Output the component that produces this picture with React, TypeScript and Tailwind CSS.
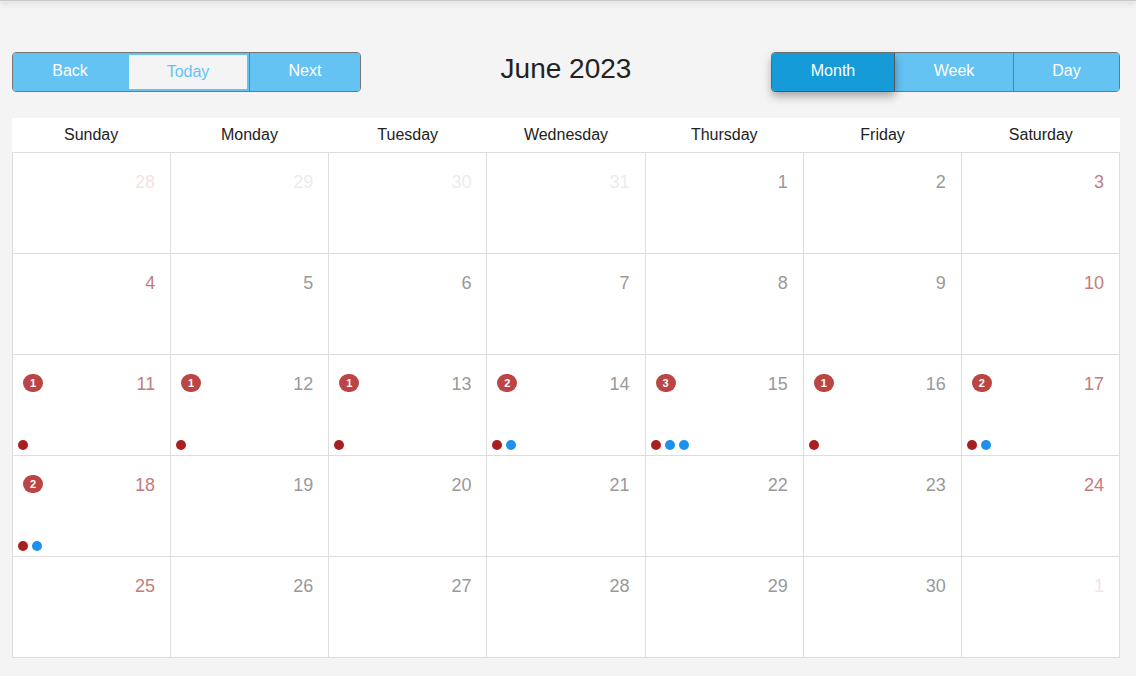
import React from "react";

type Cell = { d: number; off: boolean; dots: string[] };

const R = "r";
const B = "b";
const dotsFor: Record<number, string[]> = {
  11: [R],
  12: [R],
  13: [R],
  14: [R, B],
  15: [R, B, B],
  16: [R],
  17: [R, B],
  18: [R, B],
};

function buildCells(): Cell[] {
  const cells: Cell[] = [];
  [28, 29, 30, 31].forEach((d) => cells.push({ d, off: true, dots: [] }));
  for (let d = 1; d <= 30; d++) cells.push({ d, off: false, dots: dotsFor[d] || [] });
  cells.push({ d: 1, off: true, dots: [] });
  return cells;
}

const days = ["Sunday", "Monday", "Tuesday", "Wednesday", "Thursday", "Friday", "Saturday"];

export default function App() {
  const cells = buildCells();
  return (
    <div
      className="w-[1136px] h-[676px] bg-[#f4f4f4] overflow-hidden"
      style={{ fontFamily: '"Liberation Sans", Arial, sans-serif' }}
    >
      <div className="h-[1px] bg-[#c8c8c8] shadow-[0_1px_6px_rgba(0,0,0,0.45)]" />
      <div className="ml-[12px] w-[1108px]">
        <div className="mt-[51px] flex items-center justify-between h-[40px]">
          <div className="flex h-[40px] w-[349px] rounded-[4px] border border-[#777] overflow-hidden text-[16px]">
            <button className="w-[114px] bg-[#64c3f2] text-white pb-[2px]">Back</button>
            <button className="w-[122px] bg-[#f4f4f4] text-[#64c3f2] border-2 border-[#64c3f2]">
              Today
            </button>
            <button className="flex-1 bg-[#64c3f2] text-white border-l border-[#777] pb-[2px]">Next</button>
          </div>
          <div className="text-[28px] text-[#222] -mt-[6px]">June 2023</div>
          <div className="flex h-[40px] w-[349px] rounded-[4px] border border-[#777] text-[16px]">
            <button className="relative z-10 w-[123px] bg-[#159bd8] text-white rounded-l-[3px] border-r border-[#555] shadow-[0_5px_10px_rgba(0,0,0,0.35)] pb-[2px]">
              Month
            </button>
            <button className="w-[119px] bg-[#64c3f2] text-white border-r border-[#777] pb-[2px]">Week</button>
            <button className="flex-1 bg-[#64c3f2] text-white rounded-r-[3px] pb-[2px]">Day</button>
          </div>
        </div>
        <div className="mt-[26px] bg-white">
          <div className="grid grid-cols-7 h-[35px] border-b border-[#ddd]">
            {days.map((d) => (
              <div key={d} className="flex items-center justify-center text-[16px] text-[#222]">
                {d}
              </div>
            ))}
          </div>
          <div className="grid grid-cols-7 border-l border-[#ddd]">
            {cells.map((c, i) => {
              const col = i % 7;
              const weekend = col === 0 || col === 6;
              let color = weekend ? "text-[#c47c7e]" : "text-[#999]";
              if (c.off) color = weekend ? "text-[#f3e3e3]" : "text-[#ececec]";
              return (
                <div
                  key={i}
                  className="relative h-[101px] border-r border-b border-[#ddd] flex flex-col"
                >
                  <div className="flex items-start justify-between pt-[19px] pl-[10px] pr-[15px]">
                    {c.dots.length > 0 ? (
                      <span className="flex items-center justify-center w-[20px] h-[18px] rounded-full bg-[#bb4545] text-white text-[11px] font-bold">
                        {c.dots.length}
                      </span>
                    ) : (
                      <span />
                    )}
                    <span className={`text-[18px] leading-[21px] ${color}`}>{c.d}</span>
                  </div>
                  <div className="mt-auto mb-[5px] ml-[5px] flex gap-[4px]">
                    {c.dots.map((t, j) => (
                      <span
                        key={j}
                        className={
                          t === "r"
                            ? "w-[10px] h-[10px] rounded-full bg-[#a91f1f]"
                            : "w-[10px] h-[10px] rounded-full bg-[#1e90f0]"
                        }
                      />
                    ))}
                  </div>
                </div>
              );
            })}
          </div>
        </div>
      </div>
    </div>
  );
}
